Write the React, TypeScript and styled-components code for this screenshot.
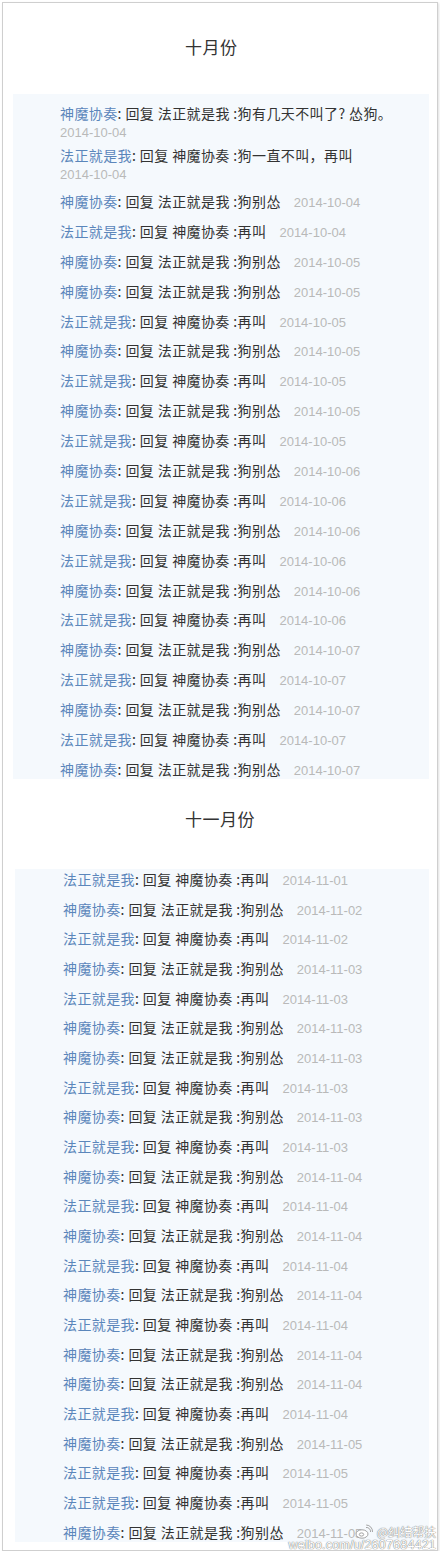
import React from "react";
import styled, { createGlobalStyle } from "styled-components";

const GlobalStyle = createGlobalStyle`
  html, body { margin: 0; padding: 0; background: #ffffff; }
  body { font-family: "Noto Sans CJK SC", "Noto Sans", sans-serif; }
`;

const Card = styled.div`
  position: relative;
  margin: 2px 2px 0 2px;
  width: 434px;
  height: 1547px;
  border: 1px solid #cfcfcf;
  box-shadow: 1px 1px 2px rgba(0, 0, 0, 0.12);
  background: #fff;
  overflow: hidden;
`;

const Section = styled.section`
  display: flex;
  flex-direction: column;
`;

const Title = styled.h2<{ $top: number; $bottom: number }>`
  margin: 0;
  padding: ${(p) => p.$top}px 0 ${(p) => p.$bottom}px 182px;
  font-size: 17px;
  line-height: 24px;
  font-weight: normal;
  color: #333;
  letter-spacing: 0.5px;
`;

const Box = styled.div<{ $padTop: number; $indent: number; $left: number }>`
  margin: 0 8px 0 ${(p) => p.$left}px;
  background: #f5f9fd;
  padding: ${(p) => p.$padTop}px 0 0 ${(p) => p.$indent}px;
  display: flex;
  flex-direction: column;
`;

const TwoLine = styled.div`
  padding: 1px 0;
  display: flex;
  flex-direction: column;
`;

const Row = styled.div<{ $h: number; $pt: number }>`
  display: flex;
  align-items: flex-start;
  height: ${(p) => p.$h}px;
  padding-top: ${(p) => p.$pt}px;
  box-sizing: border-box;
  &:last-child {
    height: ${(p) => p.$pt + 20}px;
  }
`;

const Line = styled.div`
  line-height: 20px;
  font-size: 14px;
  color: #333;
  white-space: nowrap;
  letter-spacing: 0.4px;
`;

const Name = styled.span`
  color: #5b86bb;
`;

const DateText = styled.span<{ $block?: boolean }>`
  font-family: "Liberation Sans", Arial, sans-serif;
  font-size: 13px;
  color: #b9b9b9;
  line-height: 20px;
  letter-spacing: 0;
  margin-left: ${(p) => (p.$block ? 0 : 13)}px;
  display: ${(p) => (p.$block ? "block" : "inline")};
`;

const Watermark = styled.div`
  position: absolute;
  right: 1px;
  bottom: -2px;
  display: flex;
  flex-direction: column;
  align-items: flex-end;
  font-family: "Liberation Sans", Arial, sans-serif;
  color: #fff;
  text-shadow: 0 0 1px #777, 0 0 1px #777;
  pointer-events: none;
`;

const WmTop = styled.div`
  display: flex;
  align-items: center;
  gap: 4px;
  font-family: "Noto Sans CJK SC", sans-serif;
  font-size: 12px;
  line-height: 14px;
  margin-bottom: -2px;
`;

const WmUrl = styled.div`
  font-size: 12.5px;
  line-height: 14px;
  letter-spacing: 0.2px;
`;

type Item = { who: "S" | "F"; date: string };

const S_NAME = "神魔协奏";
const F_NAME = "法正就是我";

function content(who: "S" | "F") {
  return who === "S"
    ? { name: S_NAME, other: F_NAME, msg: "狗别怂" }
    : { name: F_NAME, other: S_NAME, msg: "再叫" };
}

const oct: Item[] = [
  ["S", "10-04"], ["F", "10-04"], ["S", "10-05"], ["S", "10-05"], ["F", "10-05"],
  ["S", "10-05"], ["F", "10-05"], ["S", "10-05"], ["F", "10-05"], ["S", "10-06"],
  ["F", "10-06"], ["S", "10-06"], ["F", "10-06"], ["S", "10-06"], ["F", "10-06"],
  ["S", "10-07"], ["F", "10-07"], ["S", "10-07"], ["F", "10-07"], ["S", "10-07"],
].map(([w, d]) => ({ who: w as "S" | "F", date: "2014-" + d }));

const nov: Item[] = [
  ["F", "11-01"], ["S", "11-02"], ["F", "11-02"], ["S", "11-03"], ["F", "11-03"],
  ["S", "11-03"], ["S", "11-03"], ["F", "11-03"], ["S", "11-03"], ["F", "11-03"],
  ["S", "11-04"], ["F", "11-04"], ["S", "11-04"], ["F", "11-04"], ["S", "11-04"],
  ["F", "11-04"], ["S", "11-04"], ["S", "11-04"], ["F", "11-04"], ["S", "11-05"],
  ["F", "11-05"], ["F", "11-05"], ["S", "11-05"],
].map(([w, d]) => ({ who: w as "S" | "F", date: "2014-" + d }));

function Message({ name, other, msg }: { name: string; other: string; msg: string }) {
  return (
    <>
      <Name>{name}</Name>: 回复 {other} :{msg}
    </>
  );
}

function SingleRow({ item, h, pt }: { item: Item; h: number; pt: number }) {
  const c = content(item.who);
  return (
    <Row $h={h} $pt={pt}>
      <Line>
        <Message {...c} />
        <DateText>{item.date}</DateText>
      </Line>
    </Row>
  );
}

function WeiboLogo() {
  return (
    <svg width="18" height="16" viewBox="0 0 18 16" fill="none" stroke="#999" strokeWidth="0.9">
      <ellipse cx="7" cy="10" rx="6" ry="4.2" fill="#fff" />
      <ellipse cx="6.5" cy="10.5" rx="2.2" ry="1.6" />
      <path d="M11 3.5a4 4 0 0 1 4.5 4.5" />
      <path d="M11.2 1a6.5 6.5 0 0 1 6.3 7" />
    </svg>
  );
}

export default function App() {
  return (
    <>
      <GlobalStyle />
      <Card>
        <Section>
          <Title $top={32} $bottom={35}>十月份</Title>
          <Box $padTop={8} $indent={47} $left={10}>
            <TwoLine>
              <Line>
                <Name>{S_NAME}</Name>: 回复 {F_NAME} :狗有几天不叫了? 怂狗。
              </Line>
              <DateText $block>2014-10-04</DateText>
            </TwoLine>
            <TwoLine>
              <Line>
                <Name>{F_NAME}</Name>: 回复 {S_NAME} :狗一直不叫，再叫
              </Line>
              <DateText $block>2014-10-04</DateText>
            </TwoLine>
            {oct.map((it, i) => (
              <SingleRow key={i} item={it} h={29.9} pt={5} />
            ))}
          </Box>
        </Section>
        <Section>
          <Title $top={28} $bottom={38}>十一月份</Title>
          <Box $padTop={0} $indent={48} $left={12}>
            {nov.map((it, i) => (
              <SingleRow key={i} item={it} h={29.68} pt={0} />
            ))}
          </Box>
        </Section>
        <Watermark>
          <WmTop>
            <WeiboLogo />
            <span>@纠结帮扶</span>
          </WmTop>
          <WmUrl>weibo.com/u/2607684421</WmUrl>
        </Watermark>
      </Card>
    </>
  );
}
